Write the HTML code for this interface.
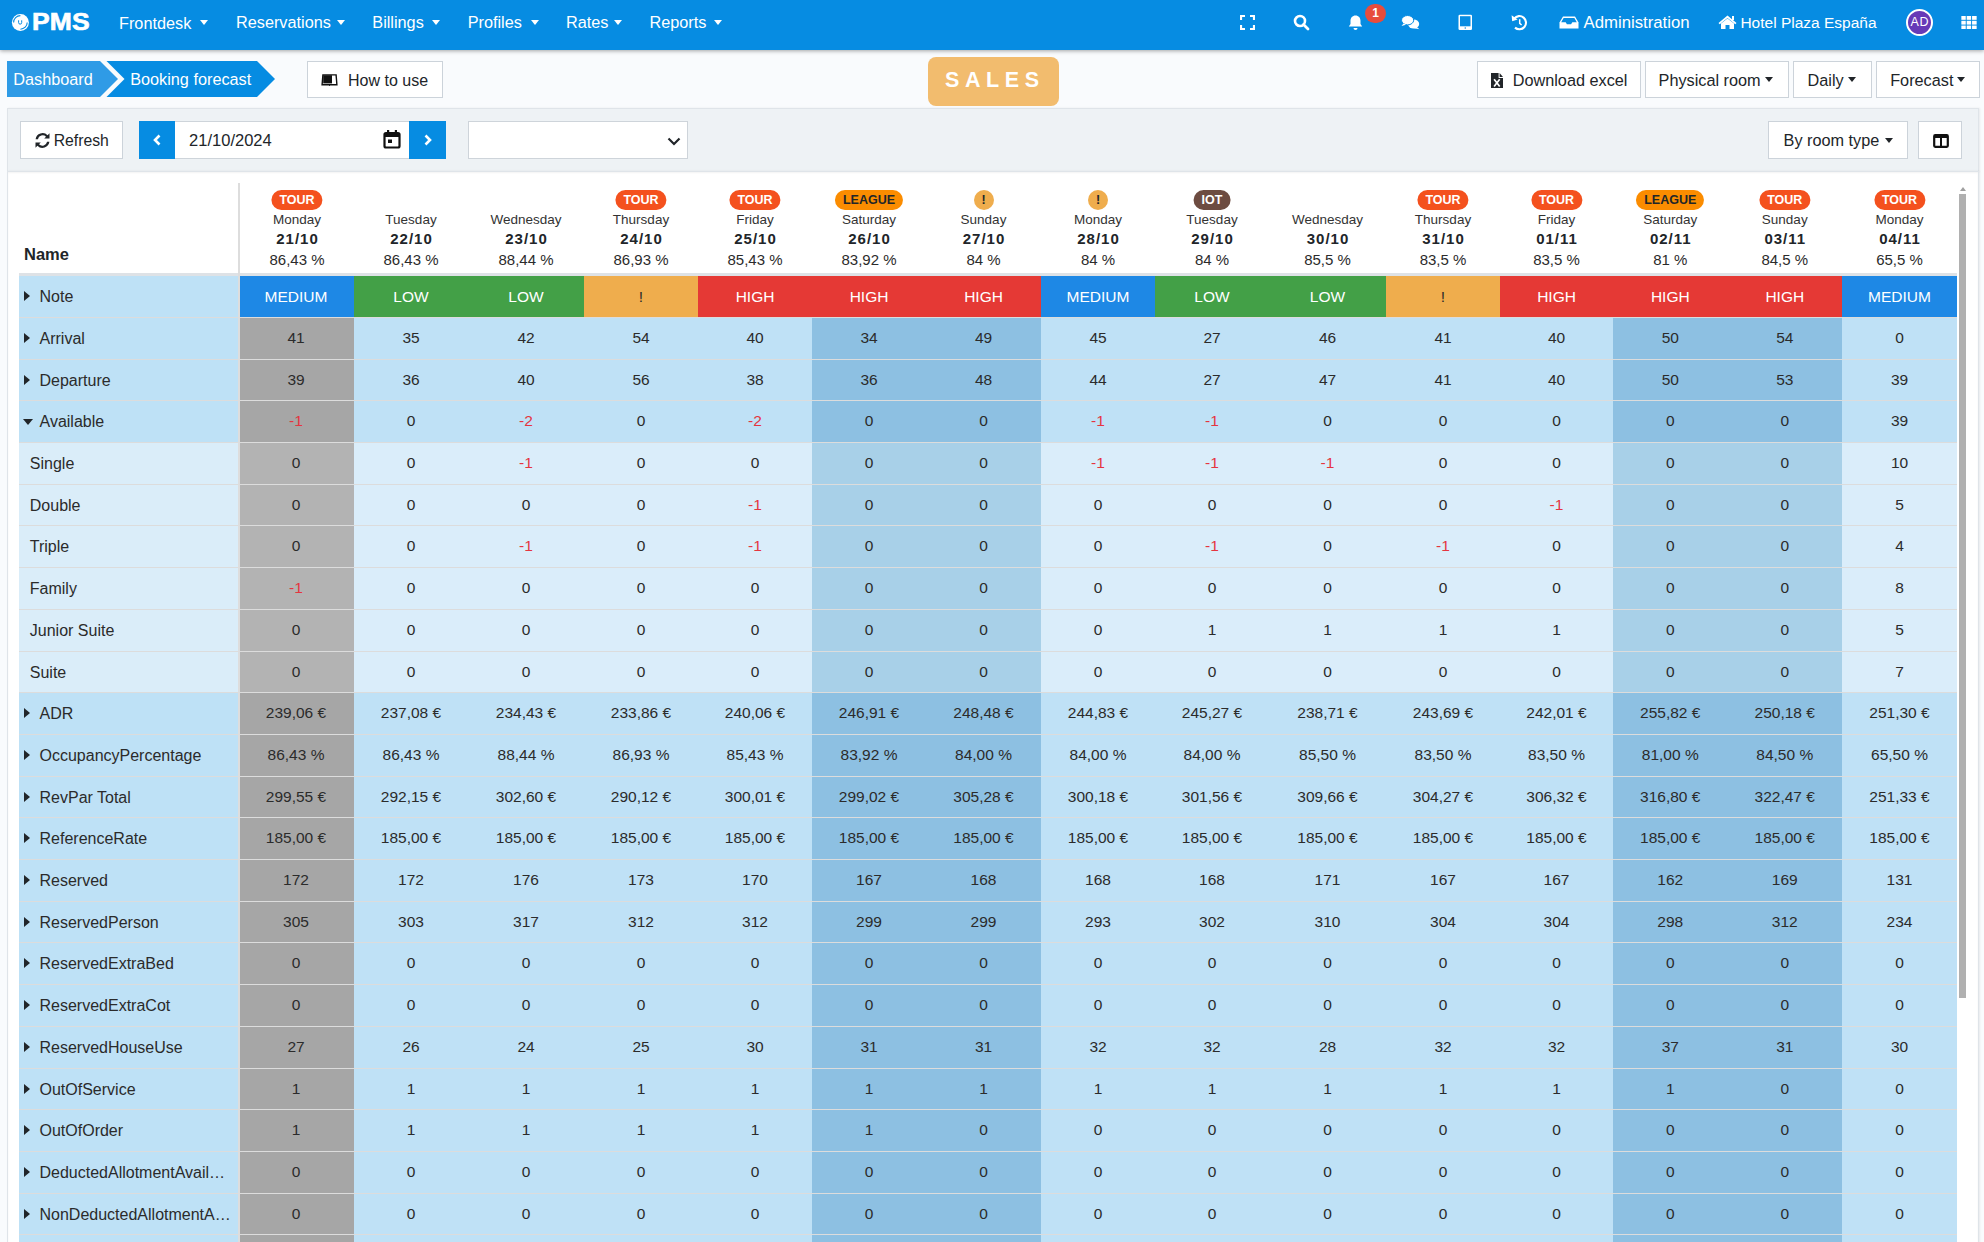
<!DOCTYPE html>
<html><head><meta charset="utf-8"><title>Booking forecast</title>
<style>
html,body{margin:0;padding:0}
body{width:1984px;height:1242px;overflow:hidden;position:relative;background:#f9fbfd;font-family:"Liberation Sans",sans-serif;color:#212529}
.a{position:absolute}
#nav{position:absolute;left:0;top:0;width:1984px;height:50px;background:#068ce2;box-shadow:0 1px 4px rgba(0,0,0,.35);z-index:5}
.ni{position:absolute;top:14.24px;line-height:1;color:#fff;font-size:16.25px;white-space:nowrap}
.cr{position:absolute;width:0;height:0;border-left:4px solid transparent;border-right:4px solid transparent;border-top:5px solid #fff}
.crd{position:absolute;width:0;height:0;border-left:4.5px solid transparent;border-right:4.5px solid transparent;border-top:5px solid #212529}
.btn{position:absolute;background:#fff;border:1px solid #ccd3da;box-sizing:border-box;font-size:16px;color:#212529;white-space:nowrap}
.bc{position:absolute;top:70.9px;line-height:1;color:#fff;font-size:16.25px;white-space:nowrap}
#tb{position:absolute;left:7px;top:108px;width:1972px;height:64px;background:#eef2f5;border:1px solid #dfe4e9;border-bottom:none;box-sizing:border-box;box-shadow:1px 0 2px rgba(0,0,0,.07)}
#wp{position:absolute;left:7px;top:171px;width:1972px;height:1100px;background:#fff;border:1px solid #dfe4e9;box-sizing:border-box;box-shadow:inset 0 1px 2px rgba(0,0,0,.05),1px 0 2px rgba(0,0,0,.07)}
.hc{position:absolute;top:183px;height:90px;text-align:center;white-space:nowrap}
.bd{position:absolute;left:50%;top:7px;height:20px;line-height:20.5px;transform:translateX(-50%);border-radius:10px;color:#fff;font-weight:bold;font-size:12.5px;padding:0 8px}
.bt{background:#f4511e}
.bl{background:#fb8c00;color:#212529}
.be{background:#efad4d;color:#212529;padding:0;width:20px}
.bi{background:#6d4c41}
.dn{position:absolute;left:0;right:0;top:29.5px;font-size:13.5px;line-height:1;color:#333}
.dt{position:absolute;left:0;right:0;top:48.2px;font-size:15px;line-height:1;font-weight:bold;letter-spacing:1px;text-indent:1px;color:#212529}
.pc{position:absolute;left:0;right:0;top:68.8px;font-size:15px;line-height:1;color:#2b2b2b}
.r{position:absolute;left:0;width:1984px}
.r>div{position:absolute;top:0;height:100%;line-height:40.7px;box-sizing:border-box;white-space:nowrap;overflow:hidden}
.r>.c{text-align:center;font-size:15.5px;color:#2b2b2b;padding-top:0}
.nmc{left:19px;width:219px;background:#bee1f6;font-size:16px;padding-left:20.5px;color:#2b2b2b;padding-top:0.8px}
.nmc.sub{background:#daedf9;padding-left:10.8px}
.r0>div{padding-top:1px!important}
.car{position:absolute;left:5px;top:15px;width:0;height:0;border-top:5.2px solid transparent;border-bottom:5.2px solid transparent;border-left:6.8px solid #212529}
.card{position:absolute;left:4px;top:18px;width:0;height:0;border-left:5.2px solid transparent;border-right:5.2px solid transparent;border-top:6.8px solid #212529}
.k1{left:240px;width:114px}
.k2{left:354px;width:114px}
.k3{left:468px;width:116px}
.k4{left:584px;width:114px}
.k5{left:698px;width:114px}
.k6{left:812px;width:114px}
.k7{left:926px;width:115px}
.k8{left:1041px;width:114px}
.k9{left:1155px;width:114px}
.k10{left:1269px;width:117px}
.k11{left:1386px;width:114px}
.k12{left:1500px;width:113px}
.k13{left:1613px;width:114.5px}
.k14{left:1727.5px;width:114.5px}
.k15{left:1842px;width:115px}
.g{background:#a6a6a6}.gs{background:#b3b3b3}
.r>.k1{left:238px;width:116px}
.b{background:#bfe1f6}.bs{background:#daedfa}
.w{background:#8dc0e2}.ws{background:#a8d0e8}
.ng{color:#e5353f!important}
.nm{background:#1e88e5;color:#fff!important}
.nl{background:#43a047;color:#fff!important}
.nx{background:#efad4d}
.nh{background:#e53935;color:#fff!important}
#vline{position:absolute;left:238px;top:183px;width:2px;height:1060px;background:#dddddd;z-index:3}
#hline{position:absolute;left:19px;top:273px;width:1938px;height:3px;background:#dee2e6}
#sbar{position:absolute;left:1959px;top:194px;width:7px;height:804px;background:#b0b0b0}
#sarr{position:absolute;left:1959.5px;top:187px;width:0;height:0;border-left:3.5px solid transparent;border-right:3.5px solid transparent;border-bottom:4px solid #a0a0a0}
svg{position:absolute}
</style></head><body>
<div id="nav">
  <svg style="left:11px;top:12.5px" width="19" height="19" viewBox="0 0 19 19"><circle cx="9.4" cy="9.4" r="8.5" fill="#fff"/><path d="M2.6 9.4A6.8 6.8 0 0 1 9.4 2.6" fill="none" stroke="#068ce2" stroke-width="1.1"/><path d="M16.2 9.4A6.8 6.8 0 0 1 9.4 16.2" fill="none" stroke="#068ce2" stroke-width="1.1"/><path d="M7.6 7.3v2.3a1.55 1.55 0 0 0 3.1 0v-2.3" fill="none" stroke="#068ce2" stroke-width="1"/></svg>
  <div class="ni" style="left:31.8px;top:10.1px;font-weight:bold;font-size:24.5px;letter-spacing:0.2px;transform:scaleX(1.08);transform-origin:0 0;-webkit-text-stroke:0.7px #fff">PMS</div>
  <div class="ni" style="left:119px;top:14.8px">Frontdesk</div><div class="cr" style="left:200px;top:20px"></div>
  <div class="ni" style="left:236px">Reservations</div><div class="cr" style="left:337px;top:20px"></div>
  <div class="ni" style="left:372.3px">Billings</div><div class="cr" style="left:432px;top:20px"></div>
  <div class="ni" style="left:467.7px">Profiles</div><div class="cr" style="left:530.5px;top:20px"></div>
  <div class="ni" style="left:566px">Rates</div><div class="cr" style="left:614px;top:20px"></div>
  <div class="ni" style="left:649.5px">Reports</div><div class="cr" style="left:714px;top:20px"></div>
  <!-- right icons -->
  <svg style="left:1240px;top:15px" width="15" height="15" viewBox="0 0 15 15" fill="none" stroke="#fff" stroke-width="2.2"><path d="M1 5V1h4M10 1h4v4M14 10v4h-4M5 14H1v-4"/></svg>
  <svg style="left:1293px;top:14px" width="17" height="17" viewBox="0 0 17 17"><circle cx="7" cy="7" r="5" fill="none" stroke="#fff" stroke-width="2.6"/><path d="M10.5 10.5l4.5 4.5" stroke="#fff" stroke-width="2.8" stroke-linecap="round"/></svg>
  <svg style="left:1348px;top:14px" width="15" height="17" viewBox="0 0 15 17"><path d="M7.5 1.5c-3 0-5 2.3-5 5.3v3.2L0.8 12.6h13.4L12.5 10V6.8c0-3-2-5.3-5-5.3z" fill="#fff"/><path d="M5.5 14a2 2 0 0 0 4 0z" fill="#fff"/></svg>
  <div class="a" style="left:1365px;top:4px;width:21px;height:19px;border-radius:10px;background:#e74c3c;color:#fff;font-weight:bold;font-size:12px;line-height:19px;text-align:center">1</div>
  <svg style="left:1401px;top:14px" width="19" height="16" viewBox="0 0 19 16"><ellipse cx="12.6" cy="10" rx="5.6" ry="4.6" fill="#fff"/><path d="M15.5 13l3 2.2l-5.5-1z" fill="#fff"/><ellipse cx="6.6" cy="6.2" rx="6.1" ry="4.7" fill="#fff" stroke="#068ce2" stroke-width="1"/><path d="M2.5 9.5l-2 2.5l4.5-1.2z" fill="#fff"/></svg>
  <svg style="left:1458px;top:14px" width="15" height="17" viewBox="0 0 15 17"><rect x="0.5" y="0.7" width="13.5" height="15.3" rx="1.3" fill="#fff"/><rect x="2" y="2.2" width="10.5" height="10.1" fill="#068ce2"/><circle cx="7.25" cy="14.1" r="0.75" fill="#068ce2"/></svg>
  <svg style="left:1511px;top:14px" width="17" height="17" viewBox="0 0 17 17"><path d="M3.2 4.6A6.6 6.6 0 1 1 4 13.6" fill="none" stroke="#fff" stroke-width="2.1"/><path d="M0.6 1.3L1.2 7.2L6.6 5.6z" fill="#fff"/><path d="M8.7 5.3V9.3L10.6 11" fill="none" stroke="#fff" stroke-width="1.5"/></svg>
  <svg style="left:1559px;top:16px" width="20" height="13" viewBox="0 0 20 13"><path d="M4 0.5h12l3.5 6v6H0.5v-6z" fill="#fff"/><path d="M4.6 2h10.8l2.4 4.3h-4.5l-1.2 2H7.9l-1.2-2H2.2z" fill="#068ce2"/></svg>
  <div class="ni" style="left:1583.5px;top:15.3px;font-size:16.75px">Administration</div>
  <svg style="left:1718px;top:15px" width="19" height="14" viewBox="0 0 19 14"><path d="M9.5 0.5L0.5 8l1.2 1.3L9.5 3l7.8 6.3L18.5 8z" fill="#fff"/><path d="M3 8.5L9.5 3.5L16 8.5V14h-4.5v-4h-4v4H3z" fill="#fff"/><rect x="14" y="1" width="2" height="4" fill="#fff"/></svg>
  <div class="ni" style="left:1740.4px;top:15.2px;font-size:15.5px">Hotel Plaza España</div>
  <div class="a" style="left:1906px;top:9px;width:23px;height:23px;border:2px solid #fff;border-radius:50%;background:#673ab7;color:#fff;font-size:12.5px;line-height:23.5px;text-align:center;box-sizing:content-box;letter-spacing:0.5px;text-indent:0.5px">AD</div>
  <svg style="left:1961px;top:15.6px" width="16" height="13.4" viewBox="0 0 16 14" fill="#fff"><rect x="0" y="0" width="4.6" height="4" /><rect x="5.6" y="0" width="4.6" height="4"/><rect x="11.2" y="0" width="4.8" height="4"/><rect x="0" y="5" width="4.6" height="4"/><rect x="5.6" y="5" width="4.6" height="4"/><rect x="11.2" y="5" width="4.8" height="4"/><rect x="0" y="10" width="4.6" height="4"/><rect x="5.6" y="10" width="4.6" height="4"/><rect x="11.2" y="10" width="4.8" height="4"/></svg>
</div>

<!-- breadcrumb -->
<svg style="left:7px;top:61px" width="270" height="36" viewBox="0 0 270 36"><path d="M0 0H93L111 18L93 36H0z" fill="#2f9be6"/><path d="M99.5 0H250L268 18L250 36H99.5L117.5 18z" fill="#068ce2"/></svg>
<div class="bc" style="left:13.3px">Dashboard</div>
<div class="bc" style="left:130.2px;top:71.3px">Booking forecast</div>
<div class="btn" style="left:307px;top:61px;width:136px;height:37px;line-height:35px"><svg style="left:13.3px;top:12.3px" width="17" height="12" viewBox="0 0 17 12"><path d="M1.9 0.9H15.1L15.9 10.7H1.1z" fill="none" stroke="#111" stroke-width="1.4"/><rect x="2.2" y="1.2" width="8.8" height="8.2" fill="#111"/><path d="M8.5 10.5v1.3" stroke="#111" stroke-width="1"/></svg><span class="a" style="left:40px;top:11.1px;line-height:1">How to use</span></div>

<div class="a" style="left:928px;top:57px;width:131px;height:49px;border-radius:8px;background:#f2bc6e;color:#fff;font-weight:bold;font-size:21.5px;line-height:47.5px;letter-spacing:5.6px;text-indent:17px;white-space:nowrap">SALES</div>

<div class="btn" style="left:1477px;top:61px;width:164px;height:37px;line-height:35px"><svg style="left:13px;top:10.8px" width="12" height="16" viewBox="0 0 12 16"><path d="M0 0H7.6V5.1H12V15.1H0z" fill="#212529"/><path d="M8.6 0L12 4H8.6z" fill="#212529"/><path d="M3.1 6.3l5.6 7.2M8.7 6.3l-5.6 7.2" stroke="#fff" stroke-width="1.7"/></svg><span class="a" style="left:34.7px;top:10.24px;line-height:1;font-size:16.25px">Download excel</span></div>
<div class="btn" style="left:1645px;top:61px;width:144px;height:37px;line-height:35px"><span class="a" style="left:12.6px;top:10.24px;line-height:1;font-size:16.25px">Physical room</span><div class="crd" style="left:119px;top:15px"></div></div>
<div class="btn" style="left:1793px;top:61px;width:79px;height:37px;line-height:35px"><span class="a" style="left:13.6px;top:10.24px;line-height:1;font-size:16.25px">Daily</span><div class="crd" style="left:54px;top:15px"></div></div>
<div class="btn" style="left:1876px;top:61px;width:104px;height:37px;line-height:35px"><span class="a" style="left:13.2px;top:10.24px;line-height:1;font-size:16.25px">Forecast</span><div class="crd" style="left:80px;top:15px"></div></div>

<!-- toolbar -->
<div id="tb"></div>
<div class="btn" style="left:20px;top:121px;width:103px;height:38px;line-height:36px"><svg style="left:14px;top:11px" width="15" height="15" viewBox="0 0 15 15" fill="#212529"><path d="M12.6 2.3A7 7 0 0 0 0.6 6.2h2.3A4.8 4.8 0 0 1 11 3.8L9.2 5.6H14.5V0.3z"/><path d="M2.4 12.7A7 7 0 0 0 14.4 8.8h-2.3A4.8 4.8 0 0 1 4 11.2L5.8 9.4H0.5V14.7z"/></svg><span class="a" style="left:32.7px;top:10.57px;line-height:1;font-size:15.75px">Refresh</span></div>
<div class="a" style="left:139px;top:121px;width:36px;height:38px;background:#068ce2"></div>
<svg style="left:152px;top:134px" width="10" height="12" viewBox="0 0 10 12"><path d="M7.5 1.5L3 6l4.5 4.5" fill="none" stroke="#fff" stroke-width="2.6"/></svg>
<div class="a" style="left:175px;top:121px;width:234px;height:38px;background:#fff;border-top:1px solid #ced4da;border-bottom:1px solid #ced4da;box-sizing:border-box;font-size:16px;line-height:36px;color:#212529"><span class="a" style="left:14.1px;top:9.93px;line-height:1;font-size:16.5px">21/10/2024</span></div>
<svg style="left:383px;top:129px" width="18" height="20" viewBox="0 0 18 20"><rect x="1.5" y="4" width="15" height="14.5" rx="1.5" fill="none" stroke="#111" stroke-width="2.2"/><rect x="1.5" y="4" width="15" height="4" fill="#111"/><rect x="4" y="1" width="2.2" height="4" fill="#111"/><rect x="11.8" y="1" width="2.2" height="4" fill="#111"/><rect x="5" y="10.5" width="4" height="3.5" fill="#111"/></svg>
<div class="a" style="left:409px;top:121px;width:37px;height:38px;background:#068ce2"></div>
<svg style="left:423px;top:134px" width="10" height="12" viewBox="0 0 10 12"><path d="M2.5 1.5L7 6l-4.5 4.5" fill="none" stroke="#fff" stroke-width="2.6"/></svg>
<div class="btn" style="left:468px;top:121px;width:220px;height:38px;border-color:#ced4da"><svg style="left:198px;top:15px" width="14" height="9" viewBox="0 0 14 9"><path d="M1.5 1.5l5.5 5.5l5.5-5.5" fill="none" stroke="#212529" stroke-width="2.2"/></svg></div>
<div class="btn" style="left:1768px;top:121px;width:140px;height:38px;line-height:36px"><span class="a" style="left:14.6px;top:9.64px;line-height:1;font-size:16.25px">By room type</span><div class="crd" style="left:116px;top:16px"></div></div>
<div class="btn" style="left:1918px;top:121px;width:44px;height:38px"><svg style="left:13.5px;top:11.5px" width="16" height="14" viewBox="0 0 16 14"><rect x="1.2" y="1.2" width="13.6" height="11.6" rx="1" fill="none" stroke="#111" stroke-width="2.2"/><rect x="1.2" y="1.2" width="13.6" height="2.8" fill="#111"/><rect x="7" y="2" width="2" height="11" fill="#111"/></svg></div>

<!-- white panel -->
<div id="wp"></div>
<div class="a" style="left:24px;top:245.83px;font-size:16.5px;font-weight:bold;color:#212529;line-height:1">Name</div>
<div class="hc k1"><span class="bd bt">TOUR</span><div class="dn">Monday</div><div class="dt">21/10</div><div class="pc">86,43 %</div></div>
<div class="hc k2"><div class="dn">Tuesday</div><div class="dt">22/10</div><div class="pc">86,43 %</div></div>
<div class="hc k3"><div class="dn">Wednesday</div><div class="dt">23/10</div><div class="pc">88,44 %</div></div>
<div class="hc k4"><span class="bd bt">TOUR</span><div class="dn">Thursday</div><div class="dt">24/10</div><div class="pc">86,93 %</div></div>
<div class="hc k5"><span class="bd bt">TOUR</span><div class="dn">Friday</div><div class="dt">25/10</div><div class="pc">85,43 %</div></div>
<div class="hc k6"><span class="bd bl">LEAGUE</span><div class="dn">Saturday</div><div class="dt">26/10</div><div class="pc">83,92 %</div></div>
<div class="hc k7"><span class="bd be">!</span><div class="dn">Sunday</div><div class="dt">27/10</div><div class="pc">84 %</div></div>
<div class="hc k8"><span class="bd be">!</span><div class="dn">Monday</div><div class="dt">28/10</div><div class="pc">84 %</div></div>
<div class="hc k9"><span class="bd bi">IOT</span><div class="dn">Tuesday</div><div class="dt">29/10</div><div class="pc">84 %</div></div>
<div class="hc k10"><div class="dn">Wednesday</div><div class="dt">30/10</div><div class="pc">85,5 %</div></div>
<div class="hc k11"><span class="bd bt">TOUR</span><div class="dn">Thursday</div><div class="dt">31/10</div><div class="pc">83,5 %</div></div>
<div class="hc k12"><span class="bd bt">TOUR</span><div class="dn">Friday</div><div class="dt">01/11</div><div class="pc">83,5 %</div></div>
<div class="hc k13"><span class="bd bl">LEAGUE</span><div class="dn">Saturday</div><div class="dt">02/11</div><div class="pc">81 %</div></div>
<div class="hc k14"><span class="bd bt">TOUR</span><div class="dn">Sunday</div><div class="dt">03/11</div><div class="pc">84,5 %</div></div>
<div class="hc k15"><span class="bd bt">TOUR</span><div class="dn">Monday</div><div class="dt">04/11</div><div class="pc">65,5 %</div></div>
<div id="hline"></div>
<div class="a" style="left:19px;top:276px;width:1938px;height:970px;background:#dcdcdc"></div>
<div class="r r0" style="top:276px;height:41px"><div class="nmc"><i class="car"></i>Note</div><div class="c k1 nm">MEDIUM</div><div class="c k2 nl">LOW</div><div class="c k3 nl">LOW</div><div class="c k4 nx">!</div><div class="c k5 nh">HIGH</div><div class="c k6 nh">HIGH</div><div class="c k7 nh">HIGH</div><div class="c k8 nm">MEDIUM</div><div class="c k9 nl">LOW</div><div class="c k10 nl">LOW</div><div class="c k11 nx">!</div><div class="c k12 nh">HIGH</div><div class="c k13 nh">HIGH</div><div class="c k14 nh">HIGH</div><div class="c k15 nm">MEDIUM</div></div>
<div class="r" style="top:318px;height:41px"><div class="nmc"><i class="car"></i>Arrival</div><div class="c k1 g">41</div><div class="c k2 b">35</div><div class="c k3 b">42</div><div class="c k4 b">54</div><div class="c k5 b">40</div><div class="c k6 w">34</div><div class="c k7 w">49</div><div class="c k8 b">45</div><div class="c k9 b">27</div><div class="c k10 b">46</div><div class="c k11 b">41</div><div class="c k12 b">40</div><div class="c k13 w">50</div><div class="c k14 w">54</div><div class="c k15 b">0</div></div>
<div class="r" style="top:360px;height:40px"><div class="nmc"><i class="car"></i>Departure</div><div class="c k1 g">39</div><div class="c k2 b">36</div><div class="c k3 b">40</div><div class="c k4 b">56</div><div class="c k5 b">38</div><div class="c k6 w">36</div><div class="c k7 w">48</div><div class="c k8 b">44</div><div class="c k9 b">27</div><div class="c k10 b">47</div><div class="c k11 b">41</div><div class="c k12 b">40</div><div class="c k13 w">50</div><div class="c k14 w">53</div><div class="c k15 b">39</div></div>
<div class="r" style="top:401px;height:41px"><div class="nmc"><i class="card"></i>Available</div><div class="c k1 g ng">-1</div><div class="c k2 b">0</div><div class="c k3 b ng">-2</div><div class="c k4 b">0</div><div class="c k5 b ng">-2</div><div class="c k6 w">0</div><div class="c k7 w">0</div><div class="c k8 b ng">-1</div><div class="c k9 b ng">-1</div><div class="c k10 b">0</div><div class="c k11 b">0</div><div class="c k12 b">0</div><div class="c k13 w">0</div><div class="c k14 w">0</div><div class="c k15 b">39</div></div>
<div class="r rs" style="top:443px;height:41px"><div class="nmc sub">Single</div><div class="c k1 gs">0</div><div class="c k2 bs">0</div><div class="c k3 bs ng">-1</div><div class="c k4 bs">0</div><div class="c k5 bs">0</div><div class="c k6 ws">0</div><div class="c k7 ws">0</div><div class="c k8 bs ng">-1</div><div class="c k9 bs ng">-1</div><div class="c k10 bs ng">-1</div><div class="c k11 bs">0</div><div class="c k12 bs">0</div><div class="c k13 ws">0</div><div class="c k14 ws">0</div><div class="c k15 bs">10</div></div>
<div class="r rs" style="top:485px;height:40px"><div class="nmc sub">Double</div><div class="c k1 gs">0</div><div class="c k2 bs">0</div><div class="c k3 bs">0</div><div class="c k4 bs">0</div><div class="c k5 bs ng">-1</div><div class="c k6 ws">0</div><div class="c k7 ws">0</div><div class="c k8 bs">0</div><div class="c k9 bs">0</div><div class="c k10 bs">0</div><div class="c k11 bs">0</div><div class="c k12 bs ng">-1</div><div class="c k13 ws">0</div><div class="c k14 ws">0</div><div class="c k15 bs">5</div></div>
<div class="r rs" style="top:526px;height:41px"><div class="nmc sub">Triple</div><div class="c k1 gs">0</div><div class="c k2 bs">0</div><div class="c k3 bs ng">-1</div><div class="c k4 bs">0</div><div class="c k5 bs ng">-1</div><div class="c k6 ws">0</div><div class="c k7 ws">0</div><div class="c k8 bs">0</div><div class="c k9 bs ng">-1</div><div class="c k10 bs">0</div><div class="c k11 bs ng">-1</div><div class="c k12 bs">0</div><div class="c k13 ws">0</div><div class="c k14 ws">0</div><div class="c k15 bs">4</div></div>
<div class="r rs" style="top:568px;height:41px"><div class="nmc sub">Family</div><div class="c k1 gs ng">-1</div><div class="c k2 bs">0</div><div class="c k3 bs">0</div><div class="c k4 bs">0</div><div class="c k5 bs">0</div><div class="c k6 ws">0</div><div class="c k7 ws">0</div><div class="c k8 bs">0</div><div class="c k9 bs">0</div><div class="c k10 bs">0</div><div class="c k11 bs">0</div><div class="c k12 bs">0</div><div class="c k13 ws">0</div><div class="c k14 ws">0</div><div class="c k15 bs">8</div></div>
<div class="r rs" style="top:610px;height:41px"><div class="nmc sub">Junior Suite</div><div class="c k1 gs">0</div><div class="c k2 bs">0</div><div class="c k3 bs">0</div><div class="c k4 bs">0</div><div class="c k5 bs">0</div><div class="c k6 ws">0</div><div class="c k7 ws">0</div><div class="c k8 bs">0</div><div class="c k9 bs">1</div><div class="c k10 bs">1</div><div class="c k11 bs">1</div><div class="c k12 bs">1</div><div class="c k13 ws">0</div><div class="c k14 ws">0</div><div class="c k15 bs">5</div></div>
<div class="r rs" style="top:652px;height:40px"><div class="nmc sub">Suite</div><div class="c k1 gs">0</div><div class="c k2 bs">0</div><div class="c k3 bs">0</div><div class="c k4 bs">0</div><div class="c k5 bs">0</div><div class="c k6 ws">0</div><div class="c k7 ws">0</div><div class="c k8 bs">0</div><div class="c k9 bs">0</div><div class="c k10 bs">0</div><div class="c k11 bs">0</div><div class="c k12 bs">0</div><div class="c k13 ws">0</div><div class="c k14 ws">0</div><div class="c k15 bs">7</div></div>
<div class="r" style="top:693px;height:41px"><div class="nmc"><i class="car"></i>ADR</div><div class="c k1 g">239,06 €</div><div class="c k2 b">237,08 €</div><div class="c k3 b">234,43 €</div><div class="c k4 b">233,86 €</div><div class="c k5 b">240,06 €</div><div class="c k6 w">246,91 €</div><div class="c k7 w">248,48 €</div><div class="c k8 b">244,83 €</div><div class="c k9 b">245,27 €</div><div class="c k10 b">238,71 €</div><div class="c k11 b">243,69 €</div><div class="c k12 b">242,01 €</div><div class="c k13 w">255,82 €</div><div class="c k14 w">250,18 €</div><div class="c k15 b">251,30 €</div></div>
<div class="r" style="top:735px;height:41px"><div class="nmc"><i class="car"></i>OccupancyPercentage</div><div class="c k1 g">86,43 %</div><div class="c k2 b">86,43 %</div><div class="c k3 b">88,44 %</div><div class="c k4 b">86,93 %</div><div class="c k5 b">85,43 %</div><div class="c k6 w">83,92 %</div><div class="c k7 w">84,00 %</div><div class="c k8 b">84,00 %</div><div class="c k9 b">84,00 %</div><div class="c k10 b">85,50 %</div><div class="c k11 b">83,50 %</div><div class="c k12 b">83,50 %</div><div class="c k13 w">81,00 %</div><div class="c k14 w">84,50 %</div><div class="c k15 b">65,50 %</div></div>
<div class="r" style="top:777px;height:40px"><div class="nmc"><i class="car"></i>RevPar Total</div><div class="c k1 g">299,55 €</div><div class="c k2 b">292,15 €</div><div class="c k3 b">302,60 €</div><div class="c k4 b">290,12 €</div><div class="c k5 b">300,01 €</div><div class="c k6 w">299,02 €</div><div class="c k7 w">305,28 €</div><div class="c k8 b">300,18 €</div><div class="c k9 b">301,56 €</div><div class="c k10 b">309,66 €</div><div class="c k11 b">304,27 €</div><div class="c k12 b">306,32 €</div><div class="c k13 w">316,80 €</div><div class="c k14 w">322,47 €</div><div class="c k15 b">251,33 €</div></div>
<div class="r" style="top:818px;height:41px"><div class="nmc"><i class="car"></i>ReferenceRate</div><div class="c k1 g">185,00 €</div><div class="c k2 b">185,00 €</div><div class="c k3 b">185,00 €</div><div class="c k4 b">185,00 €</div><div class="c k5 b">185,00 €</div><div class="c k6 w">185,00 €</div><div class="c k7 w">185,00 €</div><div class="c k8 b">185,00 €</div><div class="c k9 b">185,00 €</div><div class="c k10 b">185,00 €</div><div class="c k11 b">185,00 €</div><div class="c k12 b">185,00 €</div><div class="c k13 w">185,00 €</div><div class="c k14 w">185,00 €</div><div class="c k15 b">185,00 €</div></div>
<div class="r" style="top:860px;height:41px"><div class="nmc"><i class="car"></i>Reserved</div><div class="c k1 g">172</div><div class="c k2 b">172</div><div class="c k3 b">176</div><div class="c k4 b">173</div><div class="c k5 b">170</div><div class="c k6 w">167</div><div class="c k7 w">168</div><div class="c k8 b">168</div><div class="c k9 b">168</div><div class="c k10 b">171</div><div class="c k11 b">167</div><div class="c k12 b">167</div><div class="c k13 w">162</div><div class="c k14 w">169</div><div class="c k15 b">131</div></div>
<div class="r" style="top:902px;height:40px"><div class="nmc"><i class="car"></i>ReservedPerson</div><div class="c k1 g">305</div><div class="c k2 b">303</div><div class="c k3 b">317</div><div class="c k4 b">312</div><div class="c k5 b">312</div><div class="c k6 w">299</div><div class="c k7 w">299</div><div class="c k8 b">293</div><div class="c k9 b">302</div><div class="c k10 b">310</div><div class="c k11 b">304</div><div class="c k12 b">304</div><div class="c k13 w">298</div><div class="c k14 w">312</div><div class="c k15 b">234</div></div>
<div class="r" style="top:943px;height:41px"><div class="nmc"><i class="car"></i>ReservedExtraBed</div><div class="c k1 g">0</div><div class="c k2 b">0</div><div class="c k3 b">0</div><div class="c k4 b">0</div><div class="c k5 b">0</div><div class="c k6 w">0</div><div class="c k7 w">0</div><div class="c k8 b">0</div><div class="c k9 b">0</div><div class="c k10 b">0</div><div class="c k11 b">0</div><div class="c k12 b">0</div><div class="c k13 w">0</div><div class="c k14 w">0</div><div class="c k15 b">0</div></div>
<div class="r" style="top:985px;height:41px"><div class="nmc"><i class="car"></i>ReservedExtraCot</div><div class="c k1 g">0</div><div class="c k2 b">0</div><div class="c k3 b">0</div><div class="c k4 b">0</div><div class="c k5 b">0</div><div class="c k6 w">0</div><div class="c k7 w">0</div><div class="c k8 b">0</div><div class="c k9 b">0</div><div class="c k10 b">0</div><div class="c k11 b">0</div><div class="c k12 b">0</div><div class="c k13 w">0</div><div class="c k14 w">0</div><div class="c k15 b">0</div></div>
<div class="r" style="top:1027px;height:41px"><div class="nmc"><i class="car"></i>ReservedHouseUse</div><div class="c k1 g">27</div><div class="c k2 b">26</div><div class="c k3 b">24</div><div class="c k4 b">25</div><div class="c k5 b">30</div><div class="c k6 w">31</div><div class="c k7 w">31</div><div class="c k8 b">32</div><div class="c k9 b">32</div><div class="c k10 b">28</div><div class="c k11 b">32</div><div class="c k12 b">32</div><div class="c k13 w">37</div><div class="c k14 w">31</div><div class="c k15 b">30</div></div>
<div class="r" style="top:1069px;height:40px"><div class="nmc"><i class="car"></i>OutOfService</div><div class="c k1 g">1</div><div class="c k2 b">1</div><div class="c k3 b">1</div><div class="c k4 b">1</div><div class="c k5 b">1</div><div class="c k6 w">1</div><div class="c k7 w">1</div><div class="c k8 b">1</div><div class="c k9 b">1</div><div class="c k10 b">1</div><div class="c k11 b">1</div><div class="c k12 b">1</div><div class="c k13 w">1</div><div class="c k14 w">0</div><div class="c k15 b">0</div></div>
<div class="r" style="top:1110px;height:41px"><div class="nmc"><i class="car"></i>OutOfOrder</div><div class="c k1 g">1</div><div class="c k2 b">1</div><div class="c k3 b">1</div><div class="c k4 b">1</div><div class="c k5 b">1</div><div class="c k6 w">1</div><div class="c k7 w">0</div><div class="c k8 b">0</div><div class="c k9 b">0</div><div class="c k10 b">0</div><div class="c k11 b">0</div><div class="c k12 b">0</div><div class="c k13 w">0</div><div class="c k14 w">0</div><div class="c k15 b">0</div></div>
<div class="r" style="top:1152px;height:41px"><div class="nmc"><i class="car"></i>DeductedAllotmentAvail…</div><div class="c k1 g">0</div><div class="c k2 b">0</div><div class="c k3 b">0</div><div class="c k4 b">0</div><div class="c k5 b">0</div><div class="c k6 w">0</div><div class="c k7 w">0</div><div class="c k8 b">0</div><div class="c k9 b">0</div><div class="c k10 b">0</div><div class="c k11 b">0</div><div class="c k12 b">0</div><div class="c k13 w">0</div><div class="c k14 w">0</div><div class="c k15 b">0</div></div>
<div class="r" style="top:1194px;height:40px"><div class="nmc"><i class="car"></i>NonDeductedAllotmentA…</div><div class="c k1 g">0</div><div class="c k2 b">0</div><div class="c k3 b">0</div><div class="c k4 b">0</div><div class="c k5 b">0</div><div class="c k6 w">0</div><div class="c k7 w">0</div><div class="c k8 b">0</div><div class="c k9 b">0</div><div class="c k10 b">0</div><div class="c k11 b">0</div><div class="c k12 b">0</div><div class="c k13 w">0</div><div class="c k14 w">0</div><div class="c k15 b">0</div></div>
<div class="r" style="top:1235px;height:41px"><div class="nmc"><i class="car"></i></div><div class="c k1 g"></div><div class="c k2 b"></div><div class="c k3 b"></div><div class="c k4 b"></div><div class="c k5 b"></div><div class="c k6 w"></div><div class="c k7 w"></div><div class="c k8 b"></div><div class="c k9 b"></div><div class="c k10 b"></div><div class="c k11 b"></div><div class="c k12 b"></div><div class="c k13 w"></div><div class="c k14 w"></div><div class="c k15 b"></div></div>
<div id="vline"></div>
<div id="sarr"></div>
<div id="sbar"></div>
</body></html>
